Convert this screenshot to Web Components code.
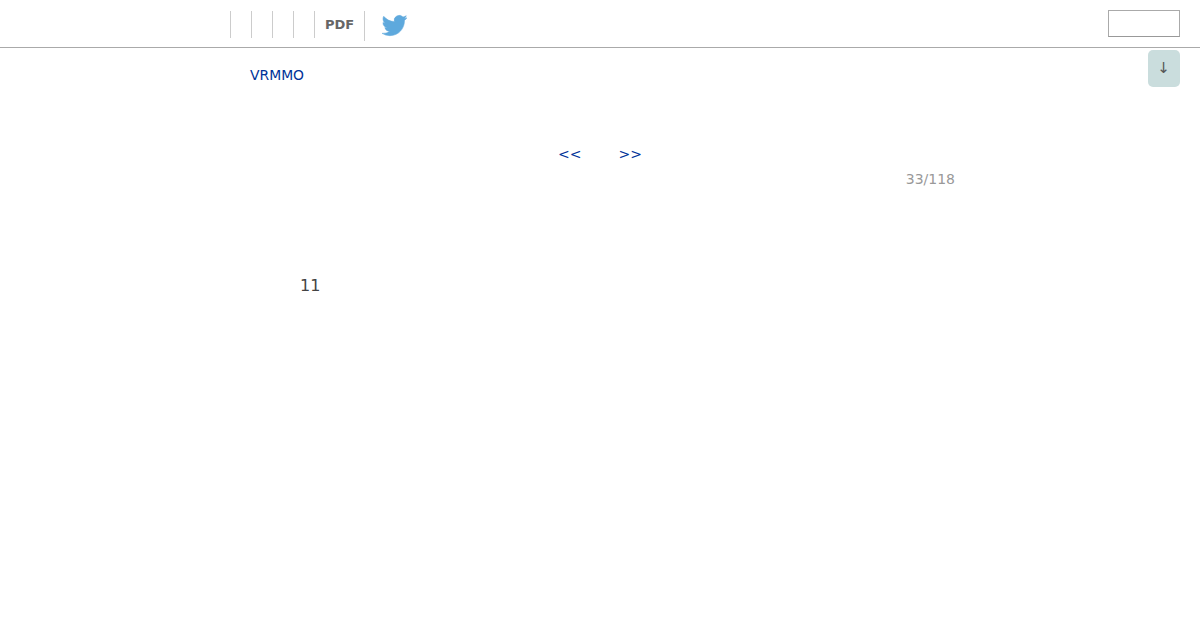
<!DOCTYPE html>
<html>
<head>
<meta charset="utf-8">
<title>VRMMO</title>
<style>
  html, body { margin: 0; padding: 0; background: #fff; }
  body { font-family: "DejaVu Sans", sans-serif; }
</style>
</head>
<body>
<site-header></site-header>
<scroll-button></scroll-button>
<page-body>
  <span slot="crumb">VRMMO</span>
  <span slot="count">33/118</span>
  <span slot="title">11</span>
</page-body>

<script>
class NavItem extends HTMLElement {
  constructor() {
    super();
    this.attachShadow({ mode: "open" });
    this.shadowRoot.innerHTML = `
<style>
  :host {
    display: block;
    box-sizing: border-box;
    min-width: 21px;
    height: 27px;
    padding: 0 10px;
    border-left: 1px solid #cccccc;
    font-size: 13px;
    font-weight: bold;
    line-height: 27px;
    color: #666666;
  }
</style>
<slot></slot>`;
  }
}

class SiteHeader extends HTMLElement {
  constructor() {
    super();
    this.attachShadow({ mode: "open" });
    this.shadowRoot.innerHTML = `
<style>
  :host {
    display: flex;
    box-sizing: border-box;
    height: 48px;
    padding: 10px 20px 0 230px;
    border-bottom: 1px solid #aaaaaa;
    justify-content: space-between;
    align-items: flex-start;
  }
  .nav {
    display: flex;
    padding-top: 1px;
  }
  .last {
    display: block;
    box-sizing: border-box;
    height: 30px;
    padding-left: 17px;
    border-left: 1px solid #cccccc;
  }
  .last svg {
    display: block;
    width: 25px;
    height: 25px;
    margin-top: 2px;
  }
  .search {
    display: block;
    box-sizing: border-box;
    width: 72px;
    height: 27px;
    margin: 0;
    padding: 0;
    background: #fff;
    border: 1px solid #aaaaaa;
    border-bottom-color: #999999;
  }
</style>
<div class="nav">
  <nav-item></nav-item>
  <nav-item></nav-item>
  <nav-item></nav-item>
  <nav-item></nav-item>
  <nav-item>PDF</nav-item>
  <div class="last">
    <svg viewBox="0 0 24 24"><path fill="#5ea9dd" stroke="#5ea9dd" stroke-width=".5" d="M23.95 4.57a10 10 0 0 1-2.82.77 4.96 4.96 0 0 0 2.16-2.72 9.9 9.9 0 0 1-3.12 1.19 4.92 4.92 0 0 0-8.38 4.48C7.69 8.1 4.07 6.13 1.64 3.16a4.82 4.82 0 0 0-.67 2.48c0 1.71.87 3.21 2.19 4.1a4.9 4.9 0 0 1-2.23-.62v.06a4.92 4.92 0 0 0 3.95 4.83 5 5 0 0 1-2.21.08 4.94 4.94 0 0 0 4.6 3.42A9.87 9.87 0 0 1 0 19.54a14 14 0 0 0 7.56 2.21c9.05 0 14-7.5 14-13.98 0-.21 0-.42-.02-.63a9.94 9.94 0 0 0 2.41-2.57z"/></svg>
  </div>
</div>
<input class="search" type="text">`;
  }
}

class ScrollButton extends HTMLElement {
  constructor() {
    super();
    this.attachShadow({ mode: "open" });
    this.shadowRoot.innerHTML = `
<style>
  :host {
    position: fixed;
    top: 50px;
    right: 20px;
    display: flex;
    width: 32px;
    height: 37px;
    padding: 0 1px 2px 0;
    box-sizing: border-box;
    justify-content: center;
    align-items: center;
    background: #cadddd;
    border-radius: 5px;
    font-size: 15px;
    color: #555555;
  }
</style>
↓`;
  }
}

class PageBody extends HTMLElement {
  constructor() {
    super();
    this.attachShadow({ mode: "open" });
    this.shadowRoot.innerHTML = `
<style>
  :host {
    display: block;
    box-sizing: border-box;
    width: 710px;
    margin: 0 auto;
    padding: 18px 0 0 5px;
  }
  .crumb {
    height: 18px;
    font-size: 13.9px;
    line-height: 18px;
    color: #003399;
  }
  .pager {
    display: flex;
    justify-content: center;
    gap: 37px;
    margin-top: 61px;
    margin-left: -5px;
    height: 18px;
    font-size: 14px;
    line-height: 18px;
    color: #003399;
  }
  .count {
    margin-top: 7px;
    height: 18px;
    text-align: right;
    font-size: 14px;
    line-height: 18px;
    color: #999999;
  }
  .title {
    margin-top: 88px;
    padding-left: 50px;
    font-size: 16px;
    line-height: 20px;
    color: #444444;
  }
</style>
<div class="crumb"><slot name="crumb"></slot></div>
<div class="pager"><span>&lt;&lt;</span><span>&gt;&gt;</span></div>
<div class="count"><slot name="count"></slot></div>
<div class="title"><slot name="title"></slot></div>`;
  }
}

customElements.define("nav-item", NavItem);
customElements.define("site-header", SiteHeader);
customElements.define("scroll-button", ScrollButton);
customElements.define("page-body", PageBody);
</script>
</body>
</html>
